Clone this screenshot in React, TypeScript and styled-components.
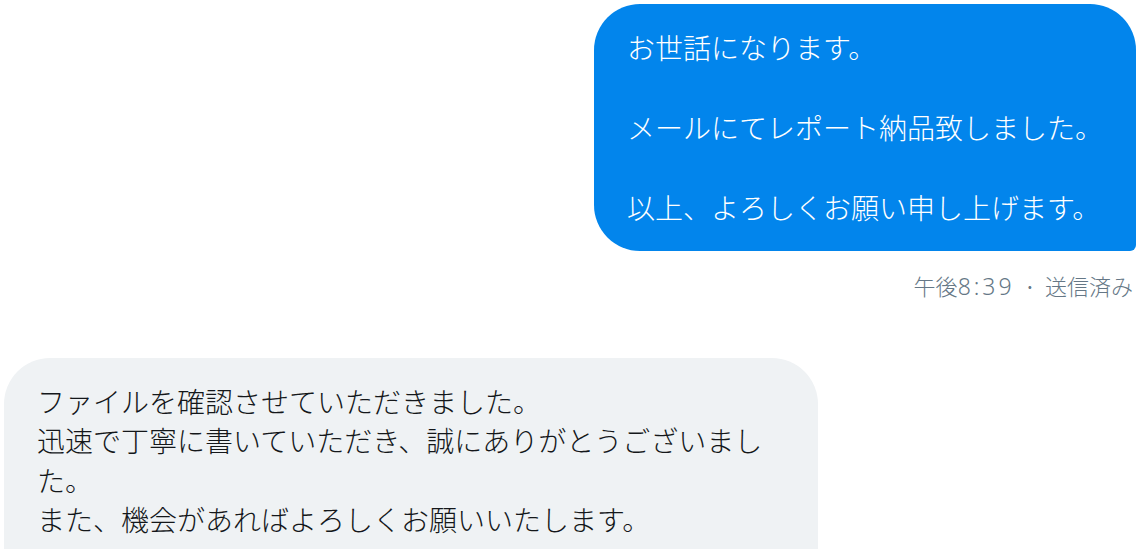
import React from "react";
import styled, { createGlobalStyle, css } from "styled-components";

const GlobalStyle = createGlobalStyle`
  html, body {
    margin: 0;
    padding: 0;
    background: #ffffff;
    overflow: hidden;
    height: 549px;
  }
  body {
    font-family: "Noto Sans CJK JP", "Noto Sans", sans-serif;
    -webkit-font-smoothing: antialiased;
  }
`;

const Page = styled.div`
  display: flex;
  flex-direction: column;
  padding: 4px 5px 0 4px;
`;

const Row = styled.div<{ $side: "left" | "right" }>`
  display: flex;
  justify-content: ${(p) => (p.$side === "right" ? "flex-end" : "flex-start")};
`;

const Bubble = styled.div<{ $variant: "sent" | "received" }>`
  font-size: 28px;
  font-weight: 300;
  padding: 0 33px;
  white-space: pre-wrap;
  word-break: break-all;
  ${(p) =>
    p.$variant === "sent"
      ? css`
          background: #0285ec;
          color: #ffffff;
          border-radius: 46px 46px 6px 46px;
          line-height: 40px;
          padding-top: 23px;
          padding-bottom: 24px;
        `
      : css`
          background: #eff2f4;
          color: #14171a;
          border-radius: 46px 46px 46px 6px;
          line-height: 39.3px;
          padding-top: 24px;
          padding-bottom: 60px;
          width: 748px;
        `}
`;

const Meta = styled.div`
  display: flex;
  justify-content: flex-end;
  align-items: center;
  height: 28px;
  margin: 20px 3px 59px 0;
  font-size: 22px;
  line-height: 28px;
  color: #657786;
  font-weight: 300;
`;

const Digits = styled.span`
  font-family: "Noto Sans", "Open Sans", sans-serif;
  font-weight: 300;
  font-size: 23px;
  letter-spacing: 3px;
`;

const Dot = styled.span`
  padding: 0 9px 0 9px;
  font-weight: 400;
`;

export default function App() {
  return (
    <>
      <GlobalStyle />
      <Page>
        <Row $side="right">
          <Bubble $variant="sent">
            {"お世話になります。\n\nメールにてレポート納品致しました。\n\n以上、よろしくお願い申し上げます。"}
          </Bubble>
        </Row>
        <Meta>
          <span>
            午後<Digits>8:39</Digits>
          </span>
          <Dot>·</Dot>
          <span>送信済み</span>
        </Meta>
        <Row $side="left">
          <Bubble $variant="received">
            {"ファイルを確認させていただきました。\n迅速で丁寧に書いていただき、誠にありがとうございました。\nまた、機会があればよろしくお願いいたします。"}
          </Bubble>
        </Row>
      </Page>
    </>
  );
}
